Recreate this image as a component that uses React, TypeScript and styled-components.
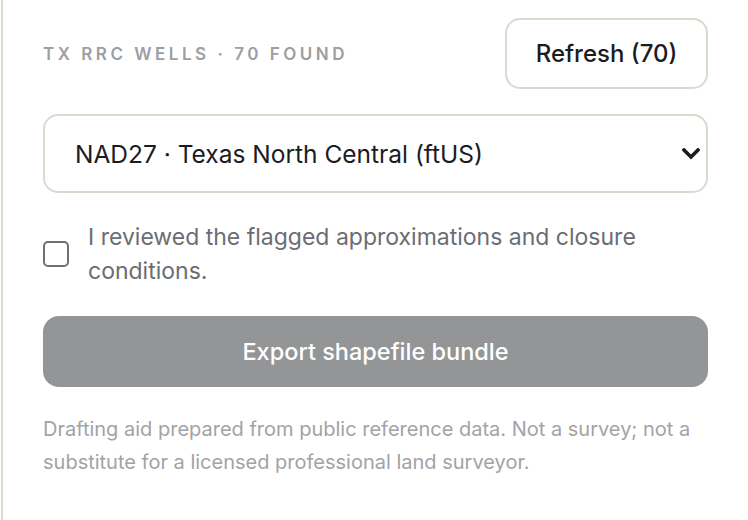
import React, { useState } from "react";
import styled, { createGlobalStyle } from "styled-components";

const GlobalStyle = createGlobalStyle`
  html, body {
    margin: 0;
    padding: 0;
    background: #ffffff;
  }
  body {
    font-family: Inter, "Noto Sans", "Liberation Sans", sans-serif;
    -webkit-font-smoothing: antialiased;
  }
  * { box-sizing: border-box; }
`;

const Panel = styled.div`
  margin-left: 1px;
  border-left: 2px solid #dcd9cf;
  min-height: 520px;
  padding: 18px 40px 0 40px;
  display: flex;
  flex-direction: column;
  gap: 25px;
`;

const HeaderRow = styled.div`
  display: flex;
  align-items: center;
  justify-content: space-between;
`;

const Heading = styled.div`
  font-size: 17px;
  font-weight: 600;
  letter-spacing: 3.5px;
  color: #9d9ea2;
  text-transform: uppercase;
`;

const OutlineButton = styled.button`
  height: 71px;
  width: 203px;
  border: 2px solid #dcd9cf;
  border-radius: 15px;
  background: #ffffff;
  font-family: inherit;
  font-size: 24px;
  font-weight: 500;
  color: #1b1c1f;
  cursor: pointer;
`;

const SelectWrap = styled.div`
  position: relative;
  height: 79px;
`;

const Select = styled.select`
  appearance: none;
  -webkit-appearance: none;
  width: 100%;
  height: 100%;
  border: 2px solid #dcd9cf;
  border-radius: 15px;
  background: #ffffff;
  padding: 0 60px 0 30px;
  font-family: inherit;
  font-size: 24.5px;
  font-weight: 400;
  color: #1b1c1f;
  outline: none;
`;

const Chevron = styled.svg`
  position: absolute;
  right: 8px;
  top: 50%;
  width: 18px;
  height: 12px;
  transform: translateY(-50%);
  pointer-events: none;
`;

const CheckRow = styled.label`
  display: flex;
  align-items: center;
  gap: 19px;
  margin-top: 2px;
`;

const Box = styled.input`
  appearance: none;
  -webkit-appearance: none;
  flex: 0 0 auto;
  margin: 0;
  width: 26px;
  height: 26px;
  border: 2px solid #6e6f73;
  border-radius: 5px;
  background: #ffffff;
`;

const CheckText = styled.span`
  font-size: 23px;
  line-height: 34px;
  color: #6b6d72;
`;

const PrimaryButton = styled.button`
  height: 71px;
  width: 100%;
  border: none;
  border-radius: 16px;
  background: #949596;
  color: #ffffff;
  font-family: inherit;
  font-size: 23.5px;
  font-weight: 500;
  margin-top: 3px;
`;

const Footnote = styled.p`
  margin: 1px 0 0;
  font-size: 20px;
  line-height: 33px;
  color: #a2a3a6;
  font-weight: 400;
`;

export default function App() {
  const [checked, setChecked] = useState(false);
  return (
    <>
      <GlobalStyle />
      <Panel>
        <HeaderRow>
          <Heading>TX RRC Wells · 70 found</Heading>
          <OutlineButton type="button">Refresh (70)</OutlineButton>
        </HeaderRow>
        <SelectWrap>
          <Select defaultValue="nad27-tx-nc">
            <option value="nad27-tx-nc">NAD27 · Texas North Central (ftUS)</option>
          </Select>
          <Chevron viewBox="0 0 18 12" aria-hidden="true">
            <path d="M2 2 L9 9 L16 2" fill="none" stroke="#1b1c1f" strokeWidth="3.6" strokeLinecap="square" />
          </Chevron>
        </SelectWrap>
        <CheckRow>
          <Box type="checkbox" checked={checked} onChange={(e) => setChecked(e.target.checked)} />
          <CheckText>I reviewed the flagged approximations and closure conditions.</CheckText>
        </CheckRow>
        <PrimaryButton type="button" disabled={!checked}>Export shapefile bundle</PrimaryButton>
        <Footnote>
          Drafting aid prepared from public reference data. Not a survey; not a substitute for a licensed professional land surveyor.
        </Footnote>
      </Panel>
    </>
  );
}
